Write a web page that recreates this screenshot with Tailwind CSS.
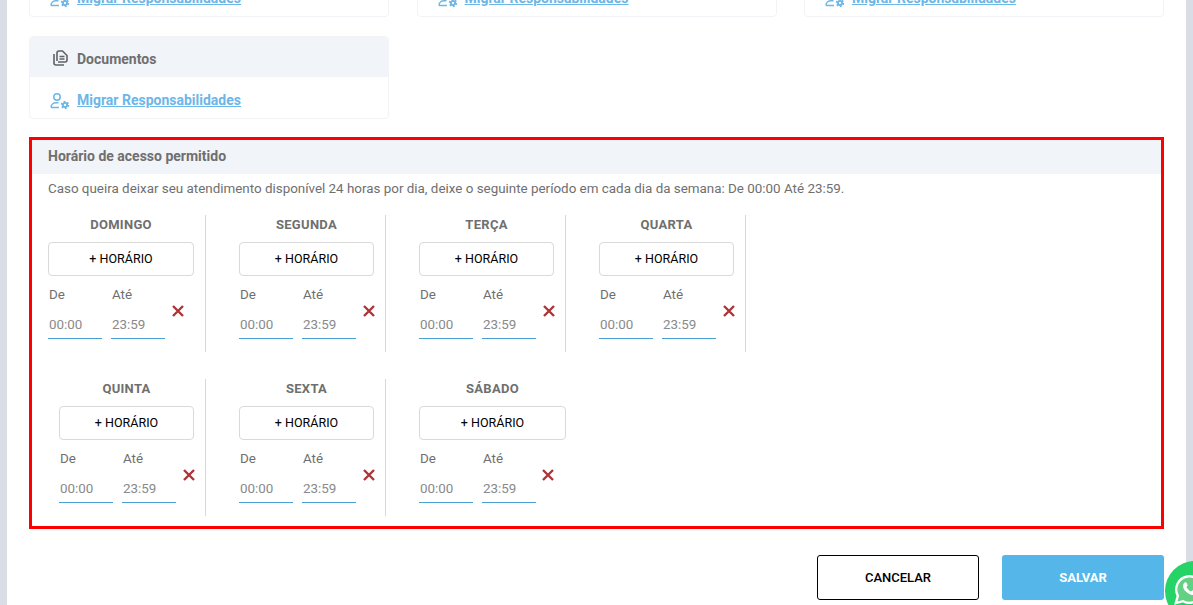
<!DOCTYPE html>
<html lang="en">
<head>
    <meta charset="UTF-8">
    <title>Horário de acesso</title>
    <script src="https://cdn.jsdelivr.net/npm/@tailwindcss/browser@4"></script>
</head>
<body class="bg-[#d9dde6] font-['Roboto',sans-serif] overflow-hidden">

<div class="relative h-[605px] w-[1193px] overflow-hidden">
    <!-- white page between the grey side bars -->
    <main class="mx-[7px] flow-root h-full bg-white px-[22px]">

        <!-- permission cards, the first row is scrolled off the top -->
        <div class="mt-[-66px] grid grid-cols-3 gap-x-[27.5px] gap-y-[19px]">
            <div class="h-[83px] rounded border border-[#f1f3f6]">
                <div class="h-[40px] bg-[#f1f4f8]"></div>
                <a class="flex h-[41px] items-center gap-[7px] pt-[6px] pl-5 text-[14px] font-bold text-[#6cb6e8] underline" href="#">
                    <svg class="h-[18px] w-[20px]" viewBox="0 0 20 18" fill="none" stroke="currentColor" stroke-width="1.5"><circle cx="7" cy="5" r="3.2"/><path d="M1 15.5c0-3 2.4-4.800 5-4.800h2.500M1 15.500h8"/><circle cx="15" cy="13" r="2.1" stroke-width="1.9"/><circle cx="15" cy="13" r="3.4" stroke-width="1.6" stroke-dasharray="1.800 1.760"/></svg>
                    Migrar Responsabilidades
                </a>
            </div>
            <div class="h-[83px] rounded border border-[#f1f3f6]">
                <div class="h-[40px] bg-[#f1f4f8]"></div>
                <a class="flex h-[41px] items-center gap-[7px] pt-[6px] pl-5 text-[14px] font-bold text-[#6cb6e8] underline" href="#">
                    <svg class="h-[18px] w-[20px]" viewBox="0 0 20 18" fill="none" stroke="currentColor" stroke-width="1.5"><circle cx="7" cy="5" r="3.2"/><path d="M1 15.5c0-3 2.4-4.800 5-4.800h2.500M1 15.500h8"/><circle cx="15" cy="13" r="2.1" stroke-width="1.9"/><circle cx="15" cy="13" r="3.4" stroke-width="1.6" stroke-dasharray="1.800 1.760"/></svg>
                    Migrar Responsabilidades
                </a>
            </div>
            <div class="h-[83px] rounded border border-[#f1f3f6]">
                <div class="h-[40px] bg-[#f1f4f8]"></div>
                <a class="flex h-[41px] items-center gap-[7px] pt-[6px] pl-5 text-[14px] font-bold text-[#6cb6e8] underline" href="#">
                    <svg class="h-[18px] w-[20px]" viewBox="0 0 20 18" fill="none" stroke="currentColor" stroke-width="1.5"><circle cx="7" cy="5" r="3.2"/><path d="M1 15.5c0-3 2.4-4.800 5-4.800h2.500M1 15.500h8"/><circle cx="15" cy="13" r="2.1" stroke-width="1.9"/><circle cx="15" cy="13" r="3.4" stroke-width="1.6" stroke-dasharray="1.800 1.760"/></svg>
                    Migrar Responsabilidades
                </a>
            </div>
            <div class="h-[83px] rounded border border-[#f1f3f6]">
                <div class="flex h-[40px] items-center gap-[9px] rounded-t bg-[#f1f4f8] pt-[5px] pl-[23px] text-[14px] font-bold text-[#6f6f6f]">
                    <svg class="mb-[3px] h-[16px] w-[15px]" viewBox="0 0 15 16" fill="none" stroke="#5f6368" stroke-width="1.6"><path d="M4 11V3a2 2 0 0 1 2-2h3.500L14 5.500V10a2 2 0 0 1-2 2H5"/><path d="M1 4v9a2 2 0 0 0 2 2h8"/><path d="M6.500 6.500h5M6.500 9h5"/></svg>
                    Documentos
                </div>
                <a class="flex h-[41px] items-center gap-[7px] pt-[6px] pl-5 text-[14px] font-bold text-[#6cb6e8] underline" href="#">
                    <svg class="h-[18px] w-[20px]" viewBox="0 0 20 18" fill="none" stroke="currentColor" stroke-width="1.5"><circle cx="7" cy="5" r="3.2"/><path d="M1 15.5c0-3 2.4-4.800 5-4.800h2.500M1 15.500h8"/><circle cx="15" cy="13" r="2.1" stroke-width="1.9"/><circle cx="15" cy="13" r="3.4" stroke-width="1.6" stroke-dasharray="1.800 1.760"/></svg>
                    Migrar Responsabilidades
                </a>
            </div>
        </div>

        <!-- allowed access hours -->
        <section class="mt-[18px] h-[392px] border-[3px] border-[#ff0000]">
            <h2 class="flex h-[34px] items-center bg-[#f1f4f8] pb-[1px] pl-4 text-[14px] font-bold text-[#6f6f6f]">Horário de acesso permitido</h2>
            <p class="mt-[7px] h-[34px] pl-4 text-[13.4px] leading-[16px] text-[#6f6f6f]">Caso queira deixar seu atendimento disponível 24 horas por dia, deixe o seguinte período em cada dia da semana: De 00:00 Até 23:59.</p>

            <div class="flex h-[137px]">
                <div class="w-[174px] border-r border-[#d8d8d8] pl-4">
                    <h3 class="mb-[10px] h-[17px] w-[146px] pt-[2px] text-center text-[13px] leading-[16px] font-bold tracking-[0.3px] text-[#6f6f6f]">DOMINGO</h3>
                    <button class="h-[34px] w-[146px] rounded border border-[#d9d9d9] text-[12.5px] text-black">+ HORÁRIO</button>
                    <div class="relative mt-[11px] flex gap-[9px]">
                        <label class="block w-[54px] text-[13.4px] text-[#6f6f6f]"><span class="block h-[19px] pl-px leading-[16px]">De</span><span class="block h-[33px] border-b border-b-[#4a9fd4] pt-[9px] pl-px text-[#8a8a8a]">00:00</span></label>
                        <label class="block w-[54px] text-[13.4px] text-[#6f6f6f]"><span class="block h-[19px] pl-px leading-[16px]">Até</span><span class="block h-[33px] border-b border-b-[#4a9fd4] pt-[9px] pl-px text-[#8a8a8a]">23:59</span></label>
                        <svg class="absolute top-[18px] left-[124px] h-[12px] w-[12px]" viewBox="0 0 12 12" stroke="#ad3438" stroke-width="2.4"><path d="M1 1l10 10M11 1L1 11"/></svg>
                    </div>
                </div>
                <div class="w-[180px] border-r border-[#d8d8d8] pl-[33px]">
                    <h3 class="mb-[10px] h-[17px] w-[135px] pt-[2px] text-center text-[13px] leading-[16px] font-bold tracking-[0.3px] text-[#6f6f6f]">SEGUNDA</h3>
                    <button class="h-[34px] w-[135px] rounded border border-[#d9d9d9] text-[12.5px] text-black">+ HORÁRIO</button>
                    <div class="relative mt-[11px] flex gap-[9px]">
                        <label class="block w-[54px] text-[13.4px] text-[#6f6f6f]"><span class="block h-[19px] pl-px leading-[16px]">De</span><span class="block h-[33px] border-b border-b-[#4a9fd4] pt-[9px] pl-px text-[#8a8a8a]">00:00</span></label>
                        <label class="block w-[54px] text-[13.4px] text-[#6f6f6f]"><span class="block h-[19px] pl-px leading-[16px]">Até</span><span class="block h-[33px] border-b border-b-[#4a9fd4] pt-[9px] pl-px text-[#8a8a8a]">23:59</span></label>
                        <svg class="absolute top-[18px] left-[123.5px] h-[12px] w-[12px]" viewBox="0 0 12 12" stroke="#ad3438" stroke-width="2.4"><path d="M1 1l10 10M11 1L1 11"/></svg>
                    </div>
                </div>
                <div class="w-[180px] border-r border-[#d8d8d8] pl-[33px]">
                    <h3 class="mb-[10px] h-[17px] w-[135px] pt-[2px] text-center text-[13px] leading-[16px] font-bold tracking-[0.3px] text-[#6f6f6f]">TERÇA</h3>
                    <button class="h-[34px] w-[135px] rounded border border-[#d9d9d9] text-[12.5px] text-black">+ HORÁRIO</button>
                    <div class="relative mt-[11px] flex gap-[9px]">
                        <label class="block w-[54px] text-[13.4px] text-[#6f6f6f]"><span class="block h-[19px] pl-px leading-[16px]">De</span><span class="block h-[33px] border-b border-b-[#4a9fd4] pt-[9px] pl-px text-[#8a8a8a]">00:00</span></label>
                        <label class="block w-[54px] text-[13.4px] text-[#6f6f6f]"><span class="block h-[19px] pl-px leading-[16px]">Até</span><span class="block h-[33px] border-b border-b-[#4a9fd4] pt-[9px] pl-px text-[#8a8a8a]">23:59</span></label>
                        <svg class="absolute top-[18px] left-[123.5px] h-[12px] w-[12px]" viewBox="0 0 12 12" stroke="#ad3438" stroke-width="2.4"><path d="M1 1l10 10M11 1L1 11"/></svg>
                    </div>
                </div>
                <div class="w-[180px] border-r border-[#d8d8d8] pl-[33px]">
                    <h3 class="mb-[10px] h-[17px] w-[135px] pt-[2px] text-center text-[13px] leading-[16px] font-bold tracking-[0.3px] text-[#6f6f6f]">QUARTA</h3>
                    <button class="h-[34px] w-[135px] rounded border border-[#d9d9d9] text-[12.5px] text-black">+ HORÁRIO</button>
                    <div class="relative mt-[11px] flex gap-[9px]">
                        <label class="block w-[54px] text-[13.4px] text-[#6f6f6f]"><span class="block h-[19px] pl-px leading-[16px]">De</span><span class="block h-[33px] border-b border-b-[#4a9fd4] pt-[9px] pl-px text-[#8a8a8a]">00:00</span></label>
                        <label class="block w-[54px] text-[13.4px] text-[#6f6f6f]"><span class="block h-[19px] pl-px leading-[16px]">Até</span><span class="block h-[33px] border-b border-b-[#4a9fd4] pt-[9px] pl-px text-[#8a8a8a]">23:59</span></label>
                        <svg class="absolute top-[18px] left-[123.5px] h-[12px] w-[12px]" viewBox="0 0 12 12" stroke="#ad3438" stroke-width="2.4"><path d="M1 1l10 10M11 1L1 11"/></svg>
                    </div>
                </div>
            </div>

            <div class="mt-[27px] flex h-[137px]">
                <div class="w-[174px] border-r border-[#d8d8d8] pl-[27px]">
                    <h3 class="mb-[10px] h-[17px] w-[135px] pt-[2px] text-center text-[13px] leading-[16px] font-bold tracking-[0.3px] text-[#6f6f6f]">QUINTA</h3>
                    <button class="h-[34px] w-[135px] rounded border border-[#d9d9d9] text-[12.5px] text-black">+ HORÁRIO</button>
                    <div class="relative mt-[11px] flex gap-[9px]">
                        <label class="block w-[54px] text-[13.4px] text-[#6f6f6f]"><span class="block h-[19px] pl-px leading-[16px]">De</span><span class="block h-[33px] border-b border-b-[#4a9fd4] pt-[9px] pl-px text-[#8a8a8a]">00:00</span></label>
                        <label class="block w-[54px] text-[13.4px] text-[#6f6f6f]"><span class="block h-[19px] pl-px leading-[16px]">Até</span><span class="block h-[33px] border-b border-b-[#4a9fd4] pt-[9px] pl-px text-[#8a8a8a]">23:59</span></label>
                        <svg class="absolute top-[18px] left-[124px] h-[12px] w-[12px]" viewBox="0 0 12 12" stroke="#ad3438" stroke-width="2.4"><path d="M1 1l10 10M11 1L1 11"/></svg>
                    </div>
                </div>
                <div class="w-[180px] border-r border-[#d8d8d8] pl-[33px]">
                    <h3 class="mb-[10px] h-[17px] w-[135px] pt-[2px] text-center text-[13px] leading-[16px] font-bold tracking-[0.3px] text-[#6f6f6f]">SEXTA</h3>
                    <button class="h-[34px] w-[135px] rounded border border-[#d9d9d9] text-[12.5px] text-black">+ HORÁRIO</button>
                    <div class="relative mt-[11px] flex gap-[9px]">
                        <label class="block w-[54px] text-[13.4px] text-[#6f6f6f]"><span class="block h-[19px] pl-px leading-[16px]">De</span><span class="block h-[33px] border-b border-b-[#4a9fd4] pt-[9px] pl-px text-[#8a8a8a]">00:00</span></label>
                        <label class="block w-[54px] text-[13.4px] text-[#6f6f6f]"><span class="block h-[19px] pl-px leading-[16px]">Até</span><span class="block h-[33px] border-b border-b-[#4a9fd4] pt-[9px] pl-px text-[#8a8a8a]">23:59</span></label>
                        <svg class="absolute top-[18px] left-[123.5px] h-[12px] w-[12px]" viewBox="0 0 12 12" stroke="#ad3438" stroke-width="2.4"><path d="M1 1l10 10M11 1L1 11"/></svg>
                    </div>
                </div>
                <div class="w-[180px] pl-[33px]">
                    <h3 class="mb-[10px] h-[17px] w-[147px] pt-[2px] text-center text-[13px] leading-[16px] font-bold tracking-[0.3px] text-[#6f6f6f]">SÁBADO</h3>
                    <button class="h-[34px] w-[147px] rounded border border-[#d9d9d9] text-[12.5px] text-black">+ HORÁRIO</button>
                    <div class="relative mt-[11px] flex gap-[9px]">
                        <label class="block w-[54px] text-[13.4px] text-[#6f6f6f]"><span class="block h-[19px] pl-px leading-[16px]">De</span><span class="block h-[33px] border-b border-b-[#4a9fd4] pt-[9px] pl-px text-[#8a8a8a]">00:00</span></label>
                        <label class="block w-[54px] text-[13.4px] text-[#6f6f6f]"><span class="block h-[19px] pl-px leading-[16px]">Até</span><span class="block h-[33px] border-b border-b-[#4a9fd4] pt-[9px] pl-px text-[#8a8a8a]">23:59</span></label>
                        <svg class="absolute top-[18px] left-[123px] h-[12px] w-[12px]" viewBox="0 0 12 12" stroke="#ad3438" stroke-width="2.4"><path d="M1 1l10 10M11 1L1 11"/></svg>
                    </div>
                </div>
            </div>
        </section>

        <div class="mt-[26px] flex justify-end gap-[23px]">
            <button class="h-[45px] w-[162px] rounded-[3px] border border-black bg-white text-[13px] font-medium text-black">CANCELAR</button>
            <button class="h-[45px] w-[162px] rounded-[3px] bg-[#54b6e9] text-[13px] font-bold text-white">SALVAR</button>
        </div>
    </main>

    <!-- whatsapp bubble, cut off by the window -->
    <div class="absolute top-[561px] left-[1165px] h-[60px] w-[60px] rounded-full bg-[#25d366] pt-[13px] pl-[9px]">
        <svg class="h-[31px] w-[31px]" viewBox="0 0 34 34" fill="none"><path d="M2 32l2.200-8A14.500 14.500 0 1 1 10 29.800z" fill="#64d083" stroke="#fff" stroke-width="2.6"/><path d="M11 10c1-1.500 2.500-1.200 3 0l1 2.500-1.400 1.800c1 2 2.800 3.800 5 5l1.800-1.500 2.600 1.200c1 .6 1 2-.2 3-2.500 2-6 .8-9.500-2.500S9 12.500 11 10z" fill="#fff"/></svg>
    </div>
</div>

</body>
</html>
